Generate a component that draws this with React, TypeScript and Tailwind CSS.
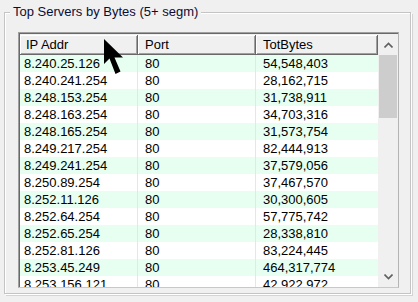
const rows = [
  ['8.240.25.126', '80', '54,548,403'],
  ['8.240.241.254', '80', '28,162,715'],
  ['8.248.153.254', '80', '31,738,911'],
  ['8.248.163.254', '80', '34,703,316'],
  ['8.248.165.254', '80', '31,573,754'],
  ['8.249.217.254', '80', '82,444,913'],
  ['8.249.241.254', '80', '37,579,056'],
  ['8.250.89.254', '80', '37,467,570'],
  ['8.252.11.126', '80', '30,300,605'],
  ['8.252.64.254', '80', '57,775,742'],
  ['8.252.65.254', '80', '28,338,810'],
  ['8.252.81.126', '80', '83,224,445'],
  ['8.253.45.249', '80', '464,317,774'],
  ['8.253.156.121', '80', '42,922,972'],
];

const headerCell =
  'h-full flex items-center border-r border-b border-[#696969] shadow-[inset_1px_1px_0_#fff,inset_-1px_-1px_0_#a0a0a0]';

function Chevron({ up }: { up?: boolean }) {
  return (
    <svg width="9" height="6" viewBox="0 0 9 6" fill="none">
      <path
        d={up ? 'M0.5 5.5L4.5 1.5L8.5 5.5' : 'M0.5 0.5L4.5 4.5L8.5 0.5'}
        stroke="#606060"
        strokeWidth="1.6"
      />
    </svg>
  );
}

export default function App() {
  return (
    <div
      className="relative w-[418px] h-[302px] bg-[#f0f0f0] pt-[12px] pl-[4px] overflow-hidden text-[13px] text-black"
      style={{ fontFamily: '"Liberation Sans", Arial, sans-serif' }}
    >
      {/* group box */}
      <div className="relative w-[407px] h-[282px] border border-[#c4c4c4] shadow-[inset_1px_1px_0_#fff,1px_1px_0_#fff,2px_2px_0_#d4d4d4] pl-[13px] pt-[19px]">
        <span className="absolute left-[5px] top-[-9px] bg-[#f0f0f0] px-[3px] leading-[16px] text-[#0c0c34]">
          Top Servers by Bytes (5+ segm)
        </span>

        {/* list view */}
        <div className="w-[381px] h-[256px] border border-[#a0a0a0] border-r-[#b4b4b4] border-b-[#c8c8c8]">
          <div className="w-full h-full flex border-t border-l border-[#696969] border-r-[#e3e3e3] border-b-[#e3e3e3] bg-white overflow-hidden">
            <div className="w-[358px] flex flex-col">
              <div className="h-[21px] shrink-0 flex bg-[#f0f0f0] pt-[1px]">
                <div className={`w-[118px] pl-[6px] ${headerCell}`}>IP Addr</div>
                <div className={`w-[118px] pl-[7px] ${headerCell}`}>Port</div>
                <div className={`w-[122px] pl-[7px] ${headerCell}`}>TotBytes</div>
              </div>
              {rows.map((r, i) => (
                <div
                  key={r[0]}
                  className={`h-[17px] shrink-0 flex items-center ${i % 2 === 0 ? 'bg-[#e6fff0]' : 'bg-white'}`}
                >
                  <div className="w-[118px] h-full flex items-center pl-[4px] border-r border-[#e6e6e6]">{r[0]}</div>
                  <div className="w-[118px] h-full flex items-center pl-[7px] border-r border-[#e6e6e6]">{r[1]}</div>
                  <div className="w-[122px] h-full flex items-center pl-[7px]">{r[2]}</div>
                </div>
              ))}
            </div>

            {/* scrollbar */}
            <div className="flex-1 flex flex-col bg-[#f0f0f0]">
              <div className="h-[21px] shrink-0 flex items-center justify-center">
                <Chevron up />
              </div>
              <div className="h-[63px] shrink-0 mx-[1px] bg-[#cdcdcd]" />
              <div className="flex-1" />
              <div className="h-[20px] shrink-0 flex items-center justify-center">
                <Chevron />
              </div>
            </div>
          </div>
        </div>
      </div>

      {/* mouse pointer */}
      <svg
        className="absolute left-[104px] top-[39px]"
        width="22"
        height="38"
        viewBox="0 0 22 38"
      >
        <path
          d="M0 0 L0 25 L5.5 19.5 L11.5 35 L16.5 32.5 L10.5 18.5 L19 18.5 Z"
          fill="#000"
        />
      </svg>
    </div>
  );
}
